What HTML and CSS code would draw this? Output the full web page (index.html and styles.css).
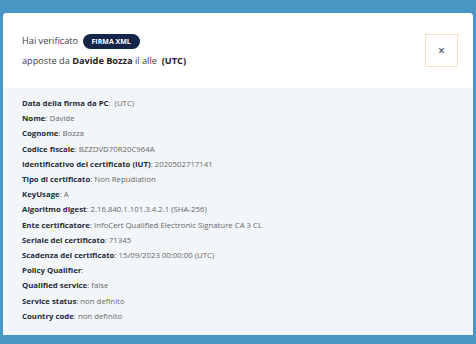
FILE: index.html
```html
<!DOCTYPE html>
<html lang="it">
<head>
  <meta charset="UTF-8" />
  <meta name="viewport" content="width=device-width, initial-scale=1.0"/>
  <title>Verifica firma</title>
  <link rel="stylesheet" href="styles.css">
</head>
<body>

<div class="modale">
  <div class="intestazione">
    <div class="titolo">
      <p class="riga">Hai verificato <span class="badge">FIRMA XML</span></p>
      <p class="riga">apposte da <b>Davide Bozza</b> il alle &nbsp;<b>(UTC)</b></p>
    </div>
    <button class="chiudi" type="button">&times;</button>
  </div>

  <div class="dettagli">
    <p><b>Data della firma da PC</b>: &nbsp;(UTC)</p>
    <p><b>Nome</b>: Davide</p>
    <p><b>Cognome</b>: Bozza</p>
    <p><b>Codice fiscale</b>: BZZDVD70R20C964A</p>
    <p><b>Identificativo del certificato (IUT)</b>: 2020502717141</p>
    <p><b>Tipo di certificato</b>: Non Repudiation</p>
    <p><b>KeyUsage</b>: A</p>
    <p><b>Algoritmo digest</b>: 2.16.840.1.101.3.4.2.1 (SHA-256)</p>
    <p><b>Ente certificatore</b>: InfoCert Qualified Electronic Signature CA 3 CL</p>
    <p><b>Seriale del certificato</b>: 71345</p>
    <p><b>Scadenza del certificato</b>: 15/09/2023 00:00:00 (UTC)</p>
    <p><b>Policy Qualifier</b>:</p>
    <p><b>Qualified service</b>: false</p>
    <p><b>Service status</b>: non definito</p>
    <p><b>Country code</b>: non definito</p>
  </div>
</div>

</body>
</html>
```

FILE: styles.css
```css
body {
  font-family: "Open Sans", Arial, sans-serif;
  margin: 0;
  padding: 13px 3px 0;
  background: #4a96c4;
  color: #333;
  height: 344px;
  box-sizing: border-box;
  overflow: hidden;
}

.modale {
  background: #f3f6f9;
  border-radius: 4px 4px 0 0;
  height: 322px;
  overflow: hidden;
}

.intestazione {
  background: #fff;
  height: 75px;
  display: flex;
  align-items: center;
  justify-content: space-between;
  padding: 0 15px 0 19px;
  box-sizing: border-box;
}

.riga {
  margin: 0;
  font-size: 9.2px;
  color: #3a3f46;
  line-height: 20px;
}

.riga b {
  color: #222;
}

.badge {
  display: inline-block;
  background: #14254a;
  color: #fff;
  font-size: 7px;
  font-weight: bold;
  padding: 0 9px;
  line-height: 15px;
  border-radius: 8px;
  margin-left: 2px;
}

.chiudi {
  width: 33px;
  height: 33px;
  background: #fff;
  border: 1px solid #f3dfbf;
  color: #6b7280;
  font-size: 12px;
  font-weight: bold;
  padding: 0;
  font-family: "Open Sans", Arial, sans-serif;
}

.dettagli {
  padding: 8px 19px 0;
}

.dettagli p {
  margin: 0;
  font-size: 7.8px;
  line-height: 15.2px;
  color: #666;
}

.dettagli b {
  font-weight: 700;
  color: #1d2b3a;
}
```
